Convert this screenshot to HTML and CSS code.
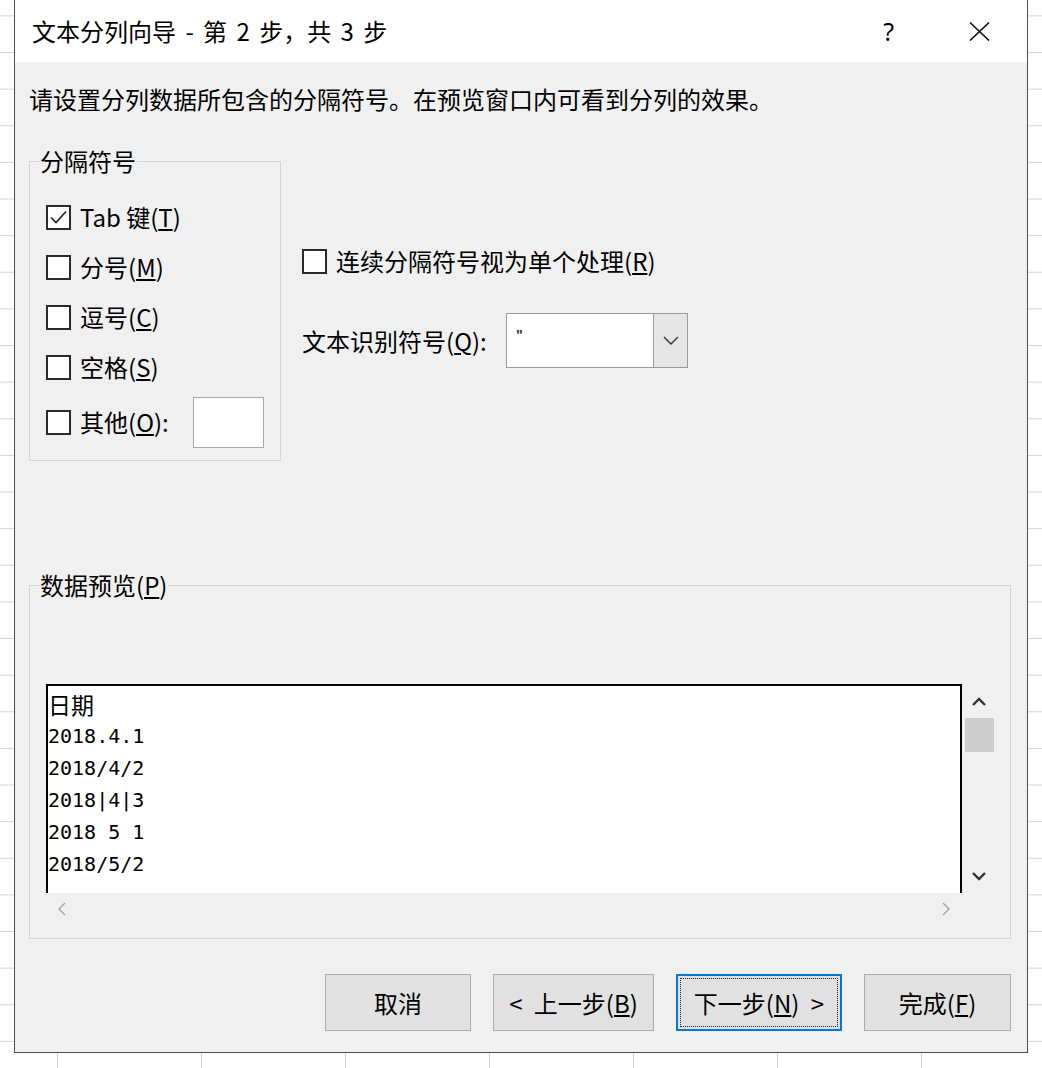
FILE: index.html
```html
<!DOCTYPE html>
<html lang="zh-CN">
<head>
    <meta charset="UTF-8">
    <title>文本分列向导</title>
    <link rel="stylesheet" href="styles.css">
</head>
<body>
    <div class="dialog">
        <div class="titlebar">
            <span class="title">文本分列向导 - 第 2 步，共 3 步</span>
            <span class="help">?</span>
            <svg class="close" viewBox="0 0 21 19"><path d="M1 0.5L20 18.5M20 0.5L1 18.5"/></svg>
        </div>

        <div class="content">
            <p class="intro">请设置分列数据所包含的分隔符号。在预览窗口内可看到分列的效果。</p>

            <div class="options">
                <fieldset class="group delims">
                    <legend>分隔符号</legend>
                    <label class="opt">
                        <span class="box"><svg viewBox="0 0 21 21"><path d="M3 10.5L8 15.5L18 4.5"/></svg></span>
                        <span class="txt">Tab 键(<u>T</u>)</span>
                    </label>
                    <label class="opt">
                        <span class="box"></span>
                        <span class="txt">分号(<u>M</u>)</span>
                    </label>
                    <label class="opt">
                        <span class="box"></span>
                        <span class="txt">逗号(<u>C</u>)</span>
                    </label>
                    <label class="opt">
                        <span class="box"></span>
                        <span class="txt">空格(<u>S</u>)</span>
                    </label>
                    <label class="opt other">
                        <span class="box"></span>
                        <span class="txt">其他(<u>O</u>):</span>
                        <span class="other-input"></span>
                    </label>
                </fieldset>

                <div class="side">
                    <label class="opt consec">
                        <span class="box"></span>
                        <span class="txt">连续分隔符号视为单个处理(<u>R</u>)</span>
                    </label>
                    <div class="qualifier">
                        <span class="q-label">文本识别符号(<u>Q</u>):</span>
                        <div class="combo">
                            <span class="combo-value">"</span>
                            <span class="combo-btn"><svg viewBox="0 0 16 9"><path d="M1 1L8 8L15 1"/></svg></span>
                        </div>
                    </div>
                </div>
            </div>

            <fieldset class="group preview">
                <legend>数据预览(<u>P</u>)</legend>
                <div class="preview-grid">
                    <div class="preview-box">
                        <div class="line head">日期</div>
                        <div class="line">2018.4.1</div>
                        <div class="line">2018/4/2</div>
                        <div class="line">2018|4|3</div>
                        <div class="line">2018 5 1</div>
                        <div class="line">2018/5/2</div>
                    </div>
                    <div class="vscroll">
                        <span class="arrow"><svg viewBox="0 0 14 9"><path d="M1 8L7 2L13 8"/></svg></span>
                        <span class="thumb"></span>
                        <span class="spacer"></span>
                        <span class="arrow"><svg viewBox="0 0 14 9"><path d="M1 1L7 7L13 1"/></svg></span>
                    </div>
                    <div class="hscroll">
                        <svg viewBox="0 0 8 14"><path d="M7 1L1 7L7 13"/></svg>
                        <svg viewBox="0 0 8 14"><path d="M1 1L7 7L1 13"/></svg>
                    </div>
                </div>
            </fieldset>

            <div class="buttons">
                <button class="btn cancel">取消</button>
                <button class="btn back">&lt; 上一步(<u>B</u>)</button>
                <button class="btn next"><span class="focus">下一步(<u>N</u>) &gt;</span></button>
                <button class="btn finish">完成(<u>F</u>)</button>
            </div>
        </div>
    </div>
</body>
</html>
```

FILE: styles.css
```css
body {
    margin: 0;
    width: 1042px;
    height: 1068px;
    padding: 0 14px;
    box-sizing: border-box;
    overflow: hidden;
    font-family: "Noto Sans CJK SC", sans-serif;
    color: #000;
    background-color: #fff;
    background-image:
        linear-gradient(#d4d4d4 1px, transparent 1px),
        linear-gradient(90deg, #d4d4d4 1px, transparent 1px);
    background-size: 100% 36.64px, 144px 100%;
    background-position: 0 15.4px, 57px 0;
}
.dialog {
    width: 1014px;
    height: 1053px;
    box-sizing: border-box;
    border: 1px solid #4d4d4d;
    border-top: 0;
    background: #f0f0f0;
    display: flex;
    flex-direction: column;
}
.titlebar {
    height: 62px;
    flex-shrink: 0;
    background: #fff;
    display: flex;
    align-items: center;
    padding: 0 37px 0 17px;
}
.title {
    flex: 1;
    font-size: 24px;
    line-height: 30px;
    word-spacing: 4px;
}
.help {
    font-family: "Noto Sans", sans-serif;
    font-size: 25px;
    line-height: 30px;
    margin-right: 75px;
}
.close {
    width: 21px;
    height: 19px;
    fill: none;
    stroke: #111;
    stroke-width: 1.6;
}
.content {
    display: flex;
    flex-direction: column;
    padding: 0 16px 0 14px;
}
.intro {
    margin: 21px 0 0;
    font-size: 24px;
    line-height: 32px;
}
.options {
    display: flex;
    gap: 21px;
    margin-top: 34px;
}
.group {
    margin: 0;
    min-width: 0;
    border: 1px solid #d3d3d3;
}
.group legend {
    font-size: 24px;
    line-height: 24px;
    padding: 0 1px;
}
.delims {
    width: 252px;
    box-sizing: border-box;
    padding: 19px 0 8px 9px;
}
.opt {
    display: flex;
    align-items: center;
    gap: 9px;
    height: 50px;
    padding-left: 7px;
    font-size: 24px;
    line-height: 24px;
}
.opt.other {
    height: 60px;
}
.box {
    width: 25px;
    height: 25px;
    box-sizing: border-box;
    border: 2px solid #2b2b2b;
    background: #fff;
    flex-shrink: 0;
}
.box svg {
    display: block;
    width: 21px;
    height: 21px;
    fill: none;
    stroke: #222;
    stroke-width: 1.6;
}
.other-input {
    width: 71px;
    height: 51px;
    box-sizing: border-box;
    margin-left: 15px;
    background: #fff;
    border: 1px solid #a8a8a8;
}
.side {
    display: flex;
    flex-direction: column;
    padding-top: 87px;
}
.opt.consec {
    padding-left: 0;
}
.qualifier {
    display: flex;
    align-items: center;
    height: 55px;
    margin-top: 27px;
    font-size: 24px;
    line-height: 24px;
}
.q-label {
    width: 204px;
}
.combo {
    width: 182px;
    height: 55px;
    box-sizing: border-box;
    display: flex;
    background: #fff;
    border: 1px solid #9a9a9a;
}
.combo-value {
    flex: 1;
    font-family: "Noto Sans", sans-serif;
    font-size: 14px;
    font-weight: bold;
    line-height: 14px;
    color: #333;
    padding: 14px 0 0 9px;
}
.combo-btn {
    width: 33px;
    display: flex;
    align-items: center;
    justify-content: center;
    background: #e5e5e5;
    border-left: 1px solid #9a9a9a;
}
.combo-btn svg {
    width: 16px;
    height: 9px;
    fill: none;
    stroke: #333;
    stroke-width: 1.4;
}
.preview {
    margin-top: 112px;
    padding: 87px 16px 13px 9px;
}
.preview-grid {
    display: grid;
    grid-template-columns: 916px 30px;
    grid-template-rows: 209px 32px;
    column-gap: 2px;
    margin-left: 7px;
}
.preview-box {
    background: #fff;
    border: 2px solid #000;
    border-bottom: 0;
    padding-top: 2px;
    font-family: "DejaVu Sans Mono", monospace;
    font-size: 20px;
    line-height: 32px;
    overflow: hidden;
}
.preview-box .head {
    font-family: "Noto Sans CJK SC", sans-serif;
    font-size: 23px;
}
.vscroll {
    grid-row: 1;
    grid-column: 2;
    display: flex;
    flex-direction: column;
    align-items: center;
}
.arrow {
    height: 34px;
    display: flex;
    align-items: center;
    justify-content: center;
}
.arrow svg {
    width: 14px;
    height: 9px;
    fill: none;
    stroke: #333;
    stroke-width: 2.4;
}
.thumb {
    width: 29px;
    height: 34px;
    background: #cdcdcd;
}
.spacer {
    flex: 1;
}
.hscroll {
    grid-row: 2;
    grid-column: 1;
    display: flex;
    align-items: center;
    justify-content: space-between;
    padding: 0 12px;
}
.hscroll svg {
    width: 8px;
    height: 14px;
    fill: none;
    stroke: #a0a0a0;
    stroke-width: 1.4;
}
.buttons {
    display: flex;
    justify-content: flex-end;
    gap: 22px;
    margin-top: 35px;
}
.btn {
    height: 57px;
    box-sizing: border-box;
    display: flex;
    align-items: center;
    justify-content: center;
    padding: 0;
    background: #e1e1e1;
    border: 1px solid #adadad;
    font-family: "Noto Sans CJK SC", sans-serif;
    font-size: 24px;
    word-spacing: 6px;
    color: #000;
}
.cancel {
    width: 146px;
}
.back {
    width: 161px;
}
.next {
    width: 166px;
    border: 2px solid #0078d7;
    padding: 2px;
}
.finish {
    width: 147px;
}
.focus {
    flex: 1;
    align-self: stretch;
    display: flex;
    align-items: center;
    justify-content: center;
    border: 1px dotted #222;
}
```
